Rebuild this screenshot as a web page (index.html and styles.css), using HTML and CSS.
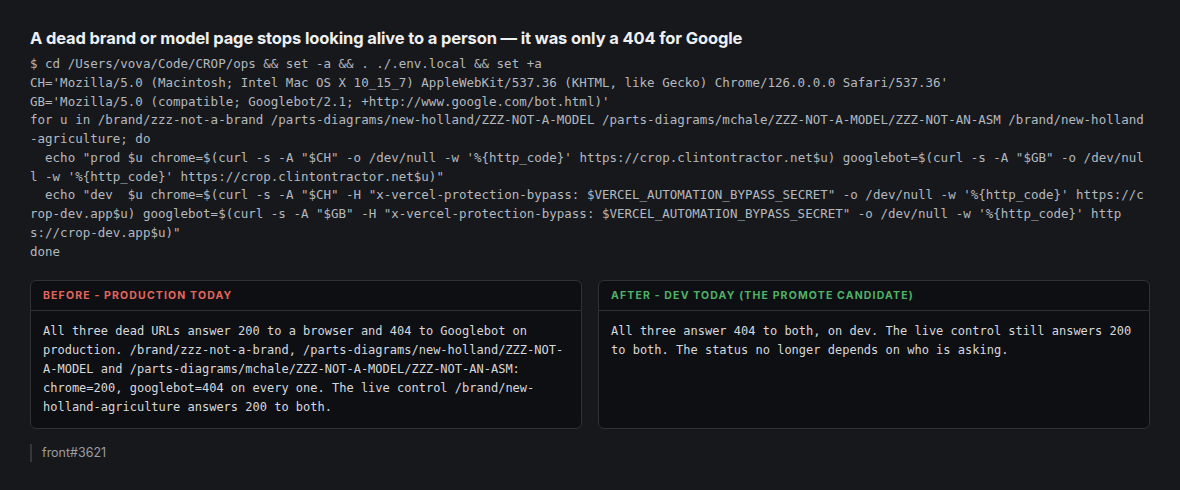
FILE: index.html
```html
<!DOCTYPE html>
<html lang="en">
<head>
<meta charset="utf-8">
<title>404 for Google</title>
<link rel="stylesheet" href="styles.css">
</head>
<body>
<main class="page">
  <h1 class="title">A dead brand or model page stops looking alive to a person — it was only a 404 for Google</h1>
  <pre class="cmd">$ cd /Users/vova/Code/CROP/ops &amp;&amp; set -a &amp;&amp; . ./.env.local &amp;&amp; set +a
CH='Mozilla/5.0 (Macintosh; Intel Mac OS X 10_15_7) AppleWebKit/537.36 (KHTML, like Gecko) Chrome/126.0.0.0 Safari/537.36'
GB='Mozilla/5.0 (compatible; Googlebot/2.1; +http://www.google.com/bot.html)'
for u in /brand/zzz-not-a-brand /parts-diagrams/new-holland/ZZZ-NOT-A-MODEL /parts-diagrams/mchale/ZZZ-NOT-A-MODEL/ZZZ-NOT-AN-ASM /brand/new-holland-agriculture; do
  echo "prod $u chrome=$(curl -s -A "$CH" -o /dev/null -w '%{http_code}' https://crop.clintontractor.net$u) googlebot=$(curl -s -A "$GB" -o /dev/null -w '%{http_code}' https://crop.clintontractor.net$u)"
  echo "dev  $u chrome=$(curl -s -A "$CH" -H "x-vercel-protection-bypass: $VERCEL_AUTOMATION_BYPASS_SECRET" -o /dev/null -w '%{http_code}' https://crop-dev.app$u) googlebot=$(curl -s -A "$GB" -H "x-vercel-protection-bypass: $VERCEL_AUTOMATION_BYPASS_SECRET" -o /dev/null -w '%{http_code}' https://crop-dev.app$u)"
done</pre>
  <section class="compare">
    <div class="card">
      <div class="card-head"><span class="label label-before">Before - production today</span></div>
      <p class="card-body">All three dead URLs answer 200 to a browser and 404 to Googlebot on production. /brand/zzz-not-a-brand, /parts-diagrams/new-holland/ZZZ-NOT-A-MODEL and /parts-diagrams/mchale/ZZZ-NOT-A-MODEL/ZZZ-NOT-AN-ASM: chrome=200, googlebot=404 on every one. The live control /brand/new-holland-agriculture answers 200 to both.</p>
    </div>
    <div class="card">
      <div class="card-head"><span class="label label-after">After - dev today (the promote candidate)</span></div>
      <p class="card-body">All three answer 404 to both, on dev. The live control still answers 200 to both. The status no longer depends on who is asking.</p>
    </div>
  </section>
  <footer class="ref">front#3621</footer>
</main>
</body>
</html>
```
FILE: styles.css
```css
html, body {
  margin: 0;
  padding: 0;
  background: #17181c;
}
body {
  font-family: Inter, "Noto Sans", "Liberation Sans", sans-serif;
  color: #e6e7ea;
}
.page {
  padding: 28px 30px 20px;
  width: 1120px;
}
.title {
  margin: 0;
  font-size: 16.5px;
  line-height: 20px;
  font-weight: 700;
  letter-spacing: -0.13px;
  color: #eeeff1;
}
.cmd {
  margin: 7px 0 0;
  font-family: "DejaVu Sans Mono", "Liberation Mono", monospace;
  font-size: 12.5px;
  line-height: 18.75px;
  color: #b4b8bf;
  white-space: pre-wrap;
  word-break: break-all;
}
.compare {
  margin-top: 19px;
  display: grid;
  grid-template-columns: 1fr 1fr;
  gap: 16px;
}
.card {
  background: #0e0f13;
  border: 1px solid #2e3138;
  border-radius: 6px;
  display: flex;
  flex-direction: column;
}
.card-head {
  padding: 8px 12px;
  border-bottom: 1px solid #2e3138;
  display: flex;
}
.label {
  font-size: 10.5px;
  line-height: 13px;
  font-weight: 700;
  text-transform: uppercase;
  letter-spacing: 1.15px;
}
.label-before { color: #e2665d; }
.label-after { color: #4eb268; }
.card-body {
  margin: 0;
  padding: 11px 12px;
  font-family: "DejaVu Sans Mono", "Liberation Mono", monospace;
  font-size: 12px;
  line-height: 19px;
  color: #d6d8dc;
}
.ref {
  margin-top: 15px;
  border-left: 2px solid #34373e;
  padding-left: 10px;
  font-size: 12.5px;
  line-height: 18px;
  color: #9a9da4;
}
```
